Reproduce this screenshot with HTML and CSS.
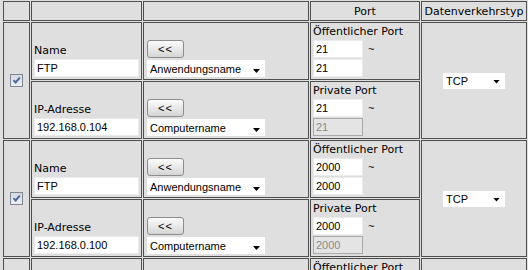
FILE: index.html
```html
<!DOCTYPE html>
<html lang="de">
<head>
<meta charset="utf-8">
<title>Virtueller Server</title>
<link rel="stylesheet" href="styles.css">
</head>
<body>
<table class="vs">
  <tr class="head">
    <td class="c1"></td>
    <td class="c2"></td>
    <td class="c3"></td>
    <td class="c4">Port</td>
    <td class="c5">Datenverkehrstyp</td>
  </tr>

  <tr class="r">
    <td rowspan="2" class="chkcell"><span class="chk"><svg viewBox="0 0 11 11" width="11" height="11"><path d="M2.5 5.2 L4.6 7.5 L8.8 2.6" fill="none" stroke="#4a67a0" stroke-width="2"/></svg></span></td>
    <td class="namecell"><div class="lbl">Name</div><input class="txt" value="FTP"></td>
    <td class="actcell"><button class="btn">&lt;&lt;</button><span class="sw wide"><select class="sel"><option>Anwendungsname</option></select></span></td>
    <td class="port"><div class="plbl">Öffentlicher Port</div><div class="prow"><input class="pin" value="21"><span class="tl">~</span></div><div class="prow"><input class="pin" value="21"></div></td>
    <td rowspan="2" class="protocell"><span class="sw proto"><select class="sel"><option>TCP</option></select></span></td>
  </tr>
  <tr class="r">
    <td class="namecell"><div class="lbl">IP-Adresse</div><input class="txt" value="192.168.0.104"></td>
    <td class="actcell"><button class="btn">&lt;&lt;</button><span class="sw wide"><select class="sel"><option>Computername</option></select></span></td>
    <td class="port"><div class="plbl">Private Port</div><div class="prow"><input class="pin" value="21"><span class="tl">~</span></div><div class="prow"><input class="pin" value="21" disabled></div></td>
  </tr>

  <tr class="r">
    <td rowspan="2" class="chkcell"><span class="chk"><svg viewBox="0 0 11 11" width="11" height="11"><path d="M2.5 5.2 L4.6 7.5 L8.8 2.6" fill="none" stroke="#4a67a0" stroke-width="2"/></svg></span></td>
    <td class="namecell"><div class="lbl">Name</div><input class="txt" value="FTP"></td>
    <td class="actcell"><button class="btn">&lt;&lt;</button><span class="sw wide"><select class="sel"><option>Anwendungsname</option></select></span></td>
    <td class="port"><div class="plbl">Öffentlicher Port</div><div class="prow"><input class="pin" value="2000"><span class="tl">~</span></div><div class="prow"><input class="pin" value="2000"></div></td>
    <td rowspan="2" class="protocell"><span class="sw proto"><select class="sel"><option>TCP</option></select></span></td>
  </tr>
  <tr class="r">
    <td class="namecell"><div class="lbl">IP-Adresse</div><input class="txt" value="192.168.0.100"></td>
    <td class="actcell"><button class="btn">&lt;&lt;</button><span class="sw wide"><select class="sel"><option>Computername</option></select></span></td>
    <td class="port"><div class="plbl">Private Port</div><div class="prow"><input class="pin" value="2000"><span class="tl">~</span></div><div class="prow"><input class="pin" value="2000" disabled></div></td>
  </tr>

  <tr class="r">
    <td rowspan="2" class="chkcell"><span class="chk"></span></td>
    <td class="namecell"><div class="lbl">Name</div><input class="txt" value=""></td>
    <td class="actcell"><button class="btn">&lt;&lt;</button><span class="sw wide"><select class="sel"><option>Anwendungsname</option></select></span></td>
    <td class="port"><div class="plbl">Öffentlicher Port</div><div class="prow"><input class="pin" value="0"><span class="tl">~</span></div><div class="prow"><input class="pin" value="0"></div></td>
    <td rowspan="2" class="protocell"><span class="sw proto"><select class="sel"><option>TCP</option></select></span></td>
  </tr>
  <tr class="r">
    <td class="namecell"><div class="lbl">IP-Adresse</div><input class="txt" value="0.0.0.0"></td>
    <td class="actcell"><button class="btn">&lt;&lt;</button><span class="sw wide"><select class="sel"><option>Computername</option></select></span></td>
    <td class="port"><div class="plbl">Private Port</div><div class="prow"><input class="pin" value="0"><span class="tl">~</span></div><div class="prow"><input class="pin" value="0" disabled></div></td>
  </tr>
</table>
</body>
</html>
```

FILE: styles.css
```css
html, body {
  margin: 0;
  padding: 0;
  background: #dfdfdf;
  overflow: hidden;
}
body {
  font: 11px "DejaVu Sans", Verdana, sans-serif;
  color: #000;
}

.vs {
  border-collapse: separate;
  border-spacing: 1px;
  margin-left: 2px;
  width: 526px;
  table-layout: fixed;
}
.vs td {
  border: 1px solid #4f4f4f;
  box-sizing: border-box;
  padding: 0 2px;
  vertical-align: top;
}

.head { height: 20px; }
.head td {
  vertical-align: middle;
  text-align: center;
  padding: 1px 0 0 0;
  line-height: 16px;
}
.c1 { width: 27px; }
.c2 { width: 111px; }
.c3 { width: 166px; }
.c4 { width: 110px; }
.c5 { width: 106px; }

.r { height: 58px; }

/* checkbox */
.vs td.chkcell {
  vertical-align: middle;
  text-align: center;
  padding: 0;
}
.chk {
  display: inline-block;
  width: 13px;
  height: 13px;
  box-sizing: border-box;
  border: 1px solid #7b8797;
  background: linear-gradient(#d5d9e0, #eef0f3);
  vertical-align: middle;
}
.chk svg { display: block; }

/* name / ip cell */
.vs td.namecell {
  vertical-align: bottom;
  padding: 0 2px 2px 2px;
}
.lbl { line-height: 16px; }

input {
  font: 11px "Liberation Sans", Arial, sans-serif;
  color: #000;
  background: #fff;
  border: 1px solid #ebebeb;
  box-sizing: border-box;
  padding: 0 2px;
  margin: 0;
  outline: none;
}
input:disabled {
  background: #e4e4e4;
  border-color: #a9a9a9;
  color: #8a8a8a;
}
.txt {
  display: block;
  width: 105px;
  height: 18px;
}

/* action cell */
.vs td.actcell {
  vertical-align: bottom;
  padding: 0 2px 2px 3px;
}
.btn {
  display: block;
  width: 37px;
  height: 18px;
  margin: 0 0 2px 0;
  padding: 0;
  border: 1px solid #8c8c8c;
  border-radius: 3px;
  background: linear-gradient(#fbfbfb, #e9e9e9 50%, #d4d4d4);
  font: 11px "Liberation Sans", Arial, sans-serif;
  color: #000;
  letter-spacing: 1px;
}

.sw {
  position: relative;
  display: block;
  background: #fff;
}
.sw::after {
  content: "";
  position: absolute;
  width: 7px;
  height: 4px;
  background: #000;
  clip-path: polygon(0 0, 100% 0, 50% 100%);
  pointer-events: none;
}
.wide { width: 118px; height: 17px; }
.wide::after { right: 5px; top: 9px; }
.sel {
  -webkit-appearance: none;
  appearance: none;
  display: block;
  width: 100%;
  height: 100%;
  border: 0;
  margin: 0;
  padding: 0 0 0 3px;
  background: transparent;
  font: 11px "Liberation Sans", Arial, sans-serif;
  color: #000;
  outline: none;
}

/* port cell */
.vs td.port { padding: 0 2px; }
.plbl { line-height: 17px; white-space: nowrap; }
.prow {
  display: flex;
  align-items: center;
  height: 18px;
  margin-bottom: 1px;
}
.pin {
  width: 50px;
  height: 18px;
}
.tl {
  margin-left: 5px;
  font: 11px "Liberation Sans", Arial, sans-serif;
}

/* protocol */
.vs td.protocell {
  vertical-align: middle;
  text-align: center;
}
.proto {
  display: inline-block;
  width: 62px;
  height: 16px;
  vertical-align: middle;
  text-align: left;
}
.proto::after { right: 5px; top: 7px; }
```
